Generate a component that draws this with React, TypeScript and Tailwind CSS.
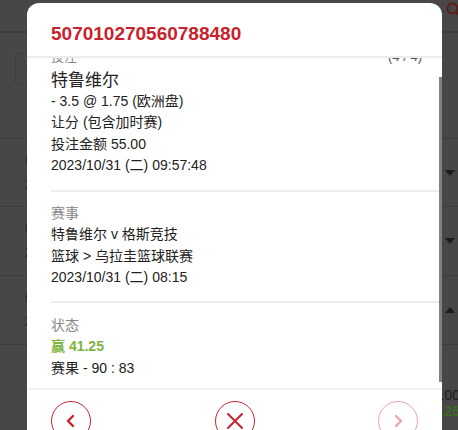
import React from "react";

const font = { fontFamily: '"Liberation Sans", "Noto Sans CJK SC", Arial, sans-serif' };

function Caret({ up = false }: { up?: boolean }) {
  return (
    <svg width="10" height="6" viewBox="0 0 10 6" className="block">
      {up ? <path d="M0 6 L5 0 L10 6 Z" fill="#1c1c1c" /> : <path d="M0 0 L10 0 L5 6 Z" fill="#1c1c1c" />}
    </svg>
  );
}

function BgRow({ caret, up, children }: { caret?: boolean; up?: boolean; children?: React.ReactNode }) {
  return (
    <div className="h-[69px] border-b border-[#3d3d3d] flex items-center justify-between pl-[25px] pr-[3px]">
      <div className="text-[14px] leading-[22px] text-[#1e1e1e]">{children}</div>
      {caret && <Caret up={up} />}
    </div>
  );
}

export default function App() {
  return (
    <div className="relative w-[458px] h-[430px] overflow-hidden bg-[#474747]" style={font}>
      {/* background page (dimmed) */}
      <div className="flex flex-col">
        <div className="h-[33px] border-b-2 border-[#3d3d3d] flex justify-end items-start pt-[2px]">
          <svg width="16" height="16" viewBox="0 0 16 16" className="-mr-[4px]">
            <circle cx="6.5" cy="6.5" r="5" fill="none" stroke="#5e1c1c" strokeWidth="2" />
            <path d="M10 10 L15 15" stroke="#5e1c1c" strokeWidth="2.4" strokeLinecap="round" />
          </svg>
        </div>
        <div className="h-[106px] border-b border-[#3d3d3d] pl-[15px] pt-[20px]">
          <div className="h-[32px] w-[60px] rounded-[4px] border border-[#3d3d3d] flex items-center pl-[10px] text-[#1e1e1e] text-[14px]">
            特
          </div>
        </div>
        <div className="h-[68px] border-b border-[#3d3d3d] flex items-center justify-between pl-[25px] pr-[3px]">
          <div className="text-[14px] leading-[22px] text-[#1e1e1e]">
            <div>特鲁</div>
            <div>2023</div>
          </div>
          <Caret />
        </div>
        <BgRow caret>
          <div>特鲁</div>
          <div>2023</div>
        </BgRow>
        <BgRow caret up>
          <div>特鲁</div>
          <div>2023</div>
        </BgRow>
        <div className="flex flex-col items-end pt-[42px] text-[14px] leading-[16px]">
          <span className="text-[#1e1e1e] -mr-[2px]">0.00</span>
          <span className="text-[#3f6a26] font-bold -mr-[2px]">1.25</span>
        </div>
      </div>

      {/* modal */}
      <div className="absolute left-[27px] top-[3px] w-[415px] h-[460px] bg-white rounded-[12px] flex flex-col overflow-hidden">
        <div className="h-[55px] shrink-0 border-b-2 border-[#ececec] flex items-center pt-[8px] pl-[24px]">
          <span className="text-[19px] font-bold text-[#c8232c] leading-[24px]">507010270560788480</span>
        </div>

        <div className="relative h-[330px] shrink-0 overflow-hidden">
          <div className="-mt-[12px] pl-[24px] pr-[3px]">
            <div className="pb-[13px] border-b-2 border-[#ececec]">
              <div className="flex justify-between pr-[17px] text-[13px] leading-[21.5px]">
                <span className="text-[#888]">投注</span>
                <span className="text-[#555]">(4 / 4)</span>
              </div>
              <div className="text-[17px] leading-[21px] mt-[2px] text-[#222]">特鲁维尔</div>
              <div className="text-[14px] leading-[21.5px] text-[#222]">
                <div>- 3.5 @ 1.75 (欧洲盘)</div>
                <div>让分 (包含加时赛)</div>
                <div>投注金额 55.00</div>
                <div>2023/10/31 (二) 09:57:48</div>
              </div>
            </div>
            <div className="pt-[11px] pb-[12px] border-b-2 border-[#ececec] text-[14px] leading-[21.5px]">
              <div className="text-[#888]">赛事</div>
              <div className="text-[#222]">特鲁维尔 v 格斯竞技</div>
              <div className="text-[#222]">篮球 &gt; 乌拉圭篮球联赛</div>
              <div className="text-[#222]">2023/10/31 (二) 08:15</div>
            </div>
            <div className="pt-[12px] pb-[14px] text-[14px] leading-[21.5px]">
              <div className="text-[#888]">状态</div>
              <div className="text-[#7cb342] font-bold">赢 41.25</div>
              <div className="text-[#222]">赛果 - 90 : 83</div>
            </div>
          </div>
          <div className="absolute right-0 top-[19px] w-[3px] h-[305px] bg-[#7e8285]" />
        </div>

        <div className="border-t-2 border-[#f2f2f2] pt-[11px] px-[24px] flex justify-between">
          <button className="w-[40px] h-[40px] rounded-full border border-[#c8232c] flex items-center justify-center">
            <svg width="16" height="16" viewBox="0 0 16 16">
              <path d="M10 3 L5 8 L10 13" fill="none" stroke="#c8232c" strokeWidth="2.4" strokeLinecap="round" strokeLinejoin="round" />
            </svg>
          </button>
          <button className="w-[40px] h-[40px] rounded-full border border-[#c8232c] flex items-center justify-center">
            <svg width="20" height="20" viewBox="0 0 20 20">
              <path d="M3 3 L17 17 M17 3 L3 17" fill="none" stroke="#c8232c" strokeWidth="2" strokeLinecap="round" />
            </svg>
          </button>
          <button className="w-[40px] h-[40px] rounded-full border border-[#c8232c] flex items-center justify-center opacity-40">
            <svg width="16" height="16" viewBox="0 0 16 16">
              <path d="M6 3 L11 8 L6 13" fill="none" stroke="#c8232c" strokeWidth="2.4" strokeLinecap="round" strokeLinejoin="round" />
            </svg>
          </button>
        </div>
      </div>
    </div>
  );
}
